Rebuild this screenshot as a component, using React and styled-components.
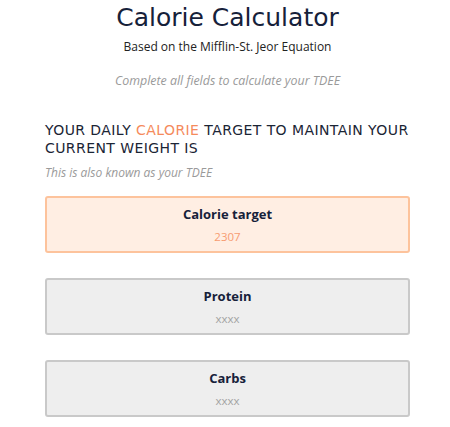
import React from 'react'
import styled, { createGlobalStyle } from 'styled-components'

const GlobalStyle = createGlobalStyle`
  body {
    margin: 0;
    background: #ffffff;
    font-family: 'Open Sans', 'Noto Sans', sans-serif;
    color: #1b2535;
  }
`

const Page = styled.div`
  width: 365px;
  margin: 0 0 0 45px;
  padding-top: 2px;
`

const Header = styled.header`
  display: flex;
  flex-direction: column;
  align-items: center;
  text-align: center;
`

const Title = styled.h1`
  margin: 0;
  font-family: 'DejaVu Sans', sans-serif;
  font-weight: 400;
  font-size: 25px;
  line-height: 32px;
  color: #16213a;
`

const Subtitle = styled.p`
  margin: 4px 0 0;
  font-size: 12px;
  line-height: 18px;
  color: #222;
`

const Hint = styled.p`
  margin: 16px 0 0;
  font-size: 12.4px;
  line-height: 18px;
  font-style: italic;
  color: #9a9a9a;
`

const Result = styled.section`
  margin-top: 31px;
`

const Heading = styled.h2`
  margin: 0;
  font-family: 'DejaVu Sans', sans-serif;
  font-weight: 400;
  font-size: 14px;
  line-height: 18px;
  letter-spacing: 0.42px;
  color: #1b2535;
  text-transform: uppercase;
`

const Accent = styled.span`
  color: #f58b5c;
`

const Note = styled.p`
  margin: 7px 0 0;
  font-size: 12px;
  line-height: 18px;
  font-style: italic;
  color: #9a9a9a;
`

const Cards = styled.div`
  display: flex;
  flex-direction: column;
  gap: 25px;
  margin-top: 14px;
`

const Card = styled.div`
  height: 57px;
  box-sizing: border-box;
  border: 2px solid ${p => (p.$active ? '#fdc39c' : '#c9c9c9')};
  background: ${p => (p.$active ? '#ffeee3' : '#eeeeee')};
  border-radius: 3px;
  display: flex;
  flex-direction: column;
  align-items: center;
  justify-content: center;
  gap: 6px;
`

const CardLabel = styled.div`
  font-size: 13px;
  font-weight: 700;
  line-height: 18px;
  color: #16213a;
`

const CardValue = styled.div`
  font-size: 11.5px;
  line-height: 16px;
  color: ${p => (p.$active ? '#f79c72' : '#a3a3a3')};
`

const cards = [
  { label: 'Calorie target', value: '2307', active: true },
  { label: 'Protein', value: 'xxxx' },
  { label: 'Carbs', value: 'xxxx' },
]

export default function App() {
  return (
    <Page>
      <GlobalStyle />
      <Header>
        <Title>Calorie Calculator</Title>
        <Subtitle>Based on the Mifflin-St. Jeor Equation</Subtitle>
        <Hint>Complete all fields to calculate your TDEE</Hint>
      </Header>
      <Result>
        <Heading>
          Your daily <Accent>calorie</Accent> target to maintain your current weight is
        </Heading>
        <Note>This is also known as your TDEE</Note>
        <Cards>
          {cards.map(c => (
            <Card key={c.label} $active={c.active}>
              <CardLabel>{c.label}</CardLabel>
              <CardValue $active={c.active}>{c.value}</CardValue>
            </Card>
          ))}
        </Cards>
      </Result>
    </Page>
  )
}
